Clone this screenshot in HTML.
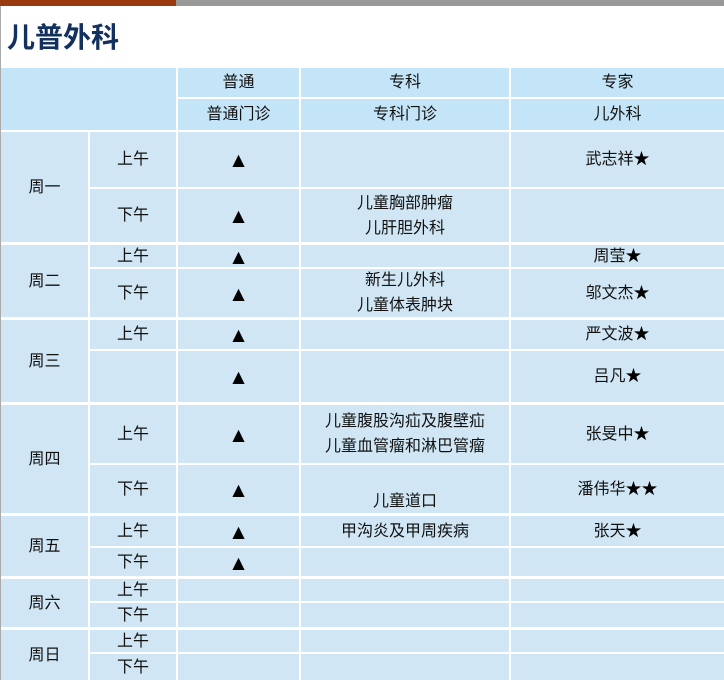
<!DOCTYPE html>
<html><head><meta charset="utf-8"><style>
body{margin:0;width:724px;height:680px;overflow:hidden;background:#fff;font-family:"Liberation Sans","Noto Sans CJK SC",sans-serif;position:relative}
.b1{position:absolute;left:0;top:0;width:176px;height:6px;background:#9a3a10}
.b2{position:absolute;left:176px;top:0;width:548px;height:6px;background:#999}
.t{position:absolute;left:7px;top:16px;font-size:28px;font-weight:bold;color:#12315f;font-family:"Noto Sans CJK SC",sans-serif}
.lb{position:absolute;left:0;top:6px;width:1px;height:674px;background:#aaa}
.c{position:absolute;background:#d0e6f4;display:flex;align-items:center;justify-content:center;text-align:center;font-size:16px;color:#111;line-height:25px}
.h{background:#c4e5f8}
.tr{font-size:16px;font-family:"DejaVu Sans",sans-serif;color:#000}
.s{color:#000}
</style></head><body>
<div class="b1"></div><div class="b2"></div>
<div class="t">儿普外科</div>
<div class="lb"></div>
<div class="c h" style="left:1px;top:68px;width:175px;height:62px"></div>
<div class="c h" style="left:178px;top:68px;width:121px;height:29px">普通</div>
<div class="c h" style="left:301px;top:68px;width:208px;height:29px">专科</div>
<div class="c h" style="left:511px;top:68px;width:213px;height:29px">专家</div>
<div class="c h" style="left:178px;top:99px;width:121px;height:31px">普通门诊</div>
<div class="c h" style="left:301px;top:99px;width:208px;height:31px">专科门诊</div>
<div class="c h" style="left:511px;top:99px;width:213px;height:31px">儿外科</div>

<div class="c" style="left:1px;top:132px;width:87px;height:110px">周一</div>
<div class="c" style="left:1px;top:245px;width:87px;height:72px">周二</div>
<div class="c" style="left:1px;top:320px;width:87px;height:82px">周三</div>
<div class="c" style="left:1px;top:405px;width:87px;height:108px">周四</div>
<div class="c" style="left:1px;top:516px;width:87px;height:60px">周五</div>
<div class="c" style="left:1px;top:579px;width:87px;height:48px">周六</div>
<div class="c" style="left:1px;top:630px;width:87px;height:50px">周日</div>

<div class="c" style="left:90px;top:132px;width:86px;height:55px">上午</div>
<div class="c" style="left:178px;top:132px;width:121px;height:55px"><span class="tr">▲</span></div>
<div class="c" style="left:301px;top:132px;width:208px;height:55px"></div>
<div class="c" style="left:511px;top:132px;width:213px;height:55px">武志祥<span class="s">★</span></div>

<div class="c" style="left:90px;top:189px;width:86px;height:53px">下午</div>
<div class="c" style="left:178px;top:189px;width:121px;height:53px"><span class="tr">▲</span></div>
<div class="c" style="left:301px;top:189px;width:208px;height:53px">儿童胸部肿瘤<br>儿肝胆外科</div>
<div class="c" style="left:511px;top:189px;width:213px;height:53px"></div>

<div class="c" style="left:90px;top:245px;width:86px;height:22px">上午</div>
<div class="c" style="left:178px;top:245px;width:121px;height:22px"><span class="tr">▲</span></div>
<div class="c" style="left:301px;top:245px;width:208px;height:22px"></div>
<div class="c" style="left:511px;top:245px;width:213px;height:22px">周莹<span class="s">★</span></div>

<div class="c" style="left:90px;top:269px;width:86px;height:48px">下午</div>
<div class="c" style="left:178px;top:269px;width:121px;height:48px"><span class="tr">▲</span></div>
<div class="c" style="left:301px;top:269px;width:208px;height:48px">新生儿外科<br>儿童体表肿块</div>
<div class="c" style="left:511px;top:269px;width:213px;height:48px">邬文杰<span class="s">★</span></div>

<div class="c" style="left:90px;top:320px;width:86px;height:29px">上午</div>
<div class="c" style="left:178px;top:320px;width:121px;height:29px"><span class="tr">▲</span></div>
<div class="c" style="left:301px;top:320px;width:208px;height:29px"></div>
<div class="c" style="left:511px;top:320px;width:213px;height:29px">严文波<span class="s">★</span></div>

<div class="c" style="left:90px;top:351px;width:86px;height:51px"></div>
<div class="c" style="left:178px;top:351px;width:121px;height:51px"><span class="tr">▲</span></div>
<div class="c" style="left:301px;top:351px;width:208px;height:51px"></div>
<div class="c" style="left:511px;top:351px;width:213px;height:51px">吕凡<span class="s">★</span></div>

<div class="c" style="left:90px;top:405px;width:86px;height:58px">上午</div>
<div class="c" style="left:178px;top:405px;width:121px;height:58px"><span class="tr">▲</span></div>
<div class="c" style="left:301px;top:405px;width:208px;height:58px">儿童腹股沟疝及腹壁疝<br>儿童血管瘤和淋巴管瘤</div>
<div class="c" style="left:511px;top:405px;width:213px;height:58px">张旻中<span class="s">★</span></div>

<div class="c" style="left:90px;top:465px;width:86px;height:48px">下午</div>
<div class="c" style="left:178px;top:465px;width:121px;height:48px"><span class="tr">▲</span></div>
<div class="c" style="left:301px;top:465px;width:208px;height:48px;align-items:flex-end"><span style="margin-bottom:-1px">儿童道口</span></div>
<div class="c" style="left:511px;top:465px;width:213px;height:48px">潘伟华<span class="s">★★</span></div>

<div class="c" style="left:90px;top:516px;width:86px;height:30px">上午</div>
<div class="c" style="left:178px;top:516px;width:121px;height:30px"><span class="tr">▲</span></div>
<div class="c" style="left:301px;top:516px;width:208px;height:30px">甲沟炎及甲周疾病</div>
<div class="c" style="left:511px;top:516px;width:213px;height:30px">张天<span class="s">★</span></div>

<div class="c" style="left:90px;top:548px;width:86px;height:28px">下午</div>
<div class="c" style="left:178px;top:548px;width:121px;height:28px"><span class="tr">▲</span></div>
<div class="c" style="left:301px;top:548px;width:208px;height:28px"></div>
<div class="c" style="left:511px;top:548px;width:213px;height:28px"></div>

<div class="c" style="left:90px;top:579px;width:86px;height:22px">上午</div>
<div class="c" style="left:178px;top:579px;width:121px;height:22px"></div>
<div class="c" style="left:301px;top:579px;width:208px;height:22px"></div>
<div class="c" style="left:511px;top:579px;width:213px;height:22px"></div>

<div class="c" style="left:90px;top:603px;width:86px;height:24px">下午</div>
<div class="c" style="left:178px;top:603px;width:121px;height:24px"></div>
<div class="c" style="left:301px;top:603px;width:208px;height:24px"></div>
<div class="c" style="left:511px;top:603px;width:213px;height:24px"></div>

<div class="c" style="left:90px;top:630px;width:86px;height:22px">上午</div>
<div class="c" style="left:178px;top:630px;width:121px;height:22px"></div>
<div class="c" style="left:301px;top:630px;width:208px;height:22px"></div>
<div class="c" style="left:511px;top:630px;width:213px;height:22px"></div>

<div class="c" style="left:90px;top:654px;width:86px;height:26px">下午</div>
<div class="c" style="left:178px;top:654px;width:121px;height:26px"></div>
<div class="c" style="left:301px;top:654px;width:208px;height:26px"></div>
<div class="c" style="left:511px;top:654px;width:213px;height:26px"></div>
</body></html>
